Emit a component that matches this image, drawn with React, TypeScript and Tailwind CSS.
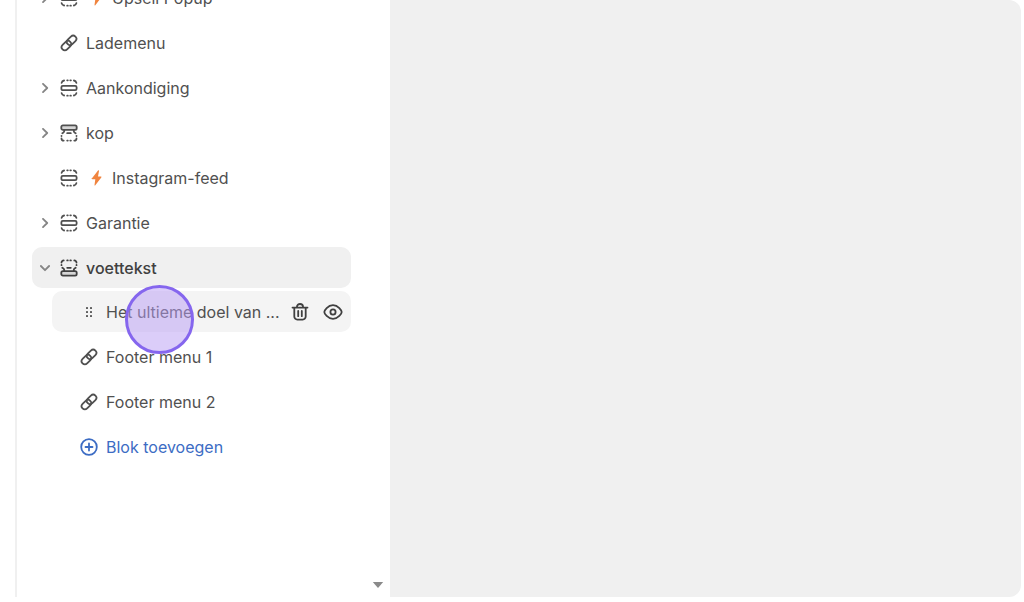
import type { ReactNode } from 'react';
import clsx from 'clsx';

type IconName = 'section' | 'header' | 'footer' | 'link';

interface Item {
  id: number;
  label: string;
  icon: IconName;
  expandable?: boolean;
  app?: boolean;
}

const sections: Item[] = [
  { id: 1, label: 'Upsell Popup', icon: 'section', expandable: true, app: true },
  { id: 2, label: 'Lademenu', icon: 'link' },
  { id: 3, label: 'Aankondiging', icon: 'section', expandable: true },
  { id: 4, label: 'kop', icon: 'header', expandable: true },
  { id: 5, label: 'Instagram-feed', icon: 'section', app: true },
  { id: 6, label: 'Garantie', icon: 'section', expandable: true },
];

const footerMenus: Item[] = [
  { id: 7, label: 'Footer menu 1', icon: 'link' },
  { id: 8, label: 'Footer menu 2', icon: 'link' },
];

const Svg = ({ children, className }: { children: ReactNode; className?: string }) => (
  <svg
    viewBox="0 0 18 18"
    className={clsx('size-[18px] shrink-0', className)}
    fill="none"
    stroke="currentColor"
    strokeWidth="1.8"
    strokeLinecap="round"
    strokeLinejoin="round"
    aria-hidden="true"
  >
    {children}
  </svg>
);

const ItemIcon = ({ name }: { name: IconName }) => {
  if (name === 'link') {
    return (
      <Svg>
        <rect x="6.2" y="3.2" width="10.8" height="6.4" rx="3.2" transform="rotate(-45 11.6 6.4)" />
        <rect x="1" y="8.4" width="10.8" height="6.4" rx="3.2" transform="rotate(-45 6.4 11.6)" />
      </Svg>
    );
  }
  if (name === 'header') {
    return (
      <Svg>
        <rect x="1.3" y="1.4" width="15.4" height="4.4" rx="1.6" fill="#d6d6d6" />
        <path d="M4.2 6.4v.8c0 1-.9 1.400-1.900 2.100M13.800 6.400v.8c0 1 .9 1.400 1.900 2.100M7.200 9.200h3.600M1.500 11.800v.2M16.500 11.800v.2M1.500 14.400a2.200 2.200 0 0 0 2.200 2.200M16.500 14.400a2.200 2.200 0 0 1-2.200 2.200M7.200 16.600h.6M10.300 16.600h.6" />
      </Svg>
    );
  }
  if (name === 'footer') {
    return (
      <Svg>
        <rect x="1.3" y="12.2" width="15.4" height="4.4" rx="1.6" fill="#d6d6d6" />
        <path d="M4.2 11.600v-.8c0-1-.9-1.400-1.900-2.100M13.800 11.600v-.8c0-1 .9-1.400 1.900-2.100M7.200 8.800h3.600M1.500 6.200v-.2M16.500 6.200v-.2M1.500 3.600a2.200 2.200 0 0 1 2.200-2.200M16.500 3.600a2.200 2.200 0 0 0-2.200-2.200M7.200 1.400h.6M10.300 1.400h.6" />
      </Svg>
    );
  }
  return (
    <Svg>
      <rect x="1.4" y="6.8" width="15.2" height="4.4" rx="1.4" />
      <path d="M1.6 3.9a3.200 3.200 0 0 1 2.500-2.400M16.400 3.900a3.200 3.200 0 0 0-2.500-2.400M7.200 1.300h.6M10.300 1.300h.6M1.600 14.100a3.200 3.200 0 0 0 2.500 2.400M16.400 14.100a3.200 3.200 0 0 1-2.500 2.400M7.200 16.700h.6M10.300 16.700h.6" />
    </Svg>
  );
};

const Chevron = ({ open }: { open?: boolean }) => (
  <svg
    viewBox="0 0 10 10"
    className={clsx('size-[10px] text-[#858585]', open && 'rotate-90')}
    fill="none"
    stroke="currentColor"
    strokeWidth="1.8"
    strokeLinecap="round"
    strokeLinejoin="round"
    aria-hidden="true"
  >
    <path d="M3 .9 7.2 5 3 9.1" />
  </svg>
);

const Bolt = () => (
  <svg viewBox="0 0 12 16" className="ml-3 mr-2.5 h-4 w-3 shrink-0 fill-[#f0843f]" aria-hidden="true">
    <path d="M8 .6 2 8.3c-.4.5-.1.9.4.9h2.900l-.8 5.700c-.1.6.4.8.8.4l6-7.900c.3-.5.1-.9-.4-.9H8L9 1C9.100.4 8.400.1 8 .6Z" />
  </svg>
);

const SectionRow = ({ item }: { item: Item }) => (
  <li className="flex h-[41px] items-center rounded-[10px] pl-2">
    <span className="flex w-5 shrink-0">
      {item.expandable && (
        <button type="button" aria-label={`${item.label} uitvouwen`}>
          <Chevron />
        </button>
      )}
    </span>
    <button type="button" className="flex items-center">
      <ItemIcon name={item.icon} />
      {item.app && <Bolt />}
      <span className={item.app ? '' : 'ml-2'}>{item.label}</span>
    </button>
  </li>
);

const FooterBlocks = () => (
  <ul className="mt-[3px] flex flex-col gap-1 pl-5">
    <li className="relative flex h-[41px] items-center rounded-[10px] bg-[#f4f4f4] pl-7 pr-2">
      <button type="button" aria-label="Verplaatsen" className="mr-2">
        <svg viewBox="0 0 18 18" className="size-[18px] fill-[#5c5c5c]" aria-hidden="true">
          {[5, 9, 13].map(y => (
            <g key={y}>
              <rect x="6" y={y - 1} width="2" height="2" rx=".5" />
              <rect x="10" y={y - 1} width="2" height="2" rx=".5" />
            </g>
          ))}
        </svg>
      </button>
      <button type="button" className="whitespace-nowrap">Het ultieme doel van ...</button>
      <button type="button" aria-label="Verwijderen" className="ml-auto text-[#404040]">
        <Svg>
          <path d="M1.5 4.6h15M6 4.2V3.6a3 2.6 0 0 1 6 0v.6M3.3 5v8.6a3 3 0 0 0 3 3h5.4a3 3 0 0 0 3-3V5M7.2 8v5.2M10.8 8v5.2" />
        </Svg>
      </button>
      <button type="button" aria-label="Verbergen" className="ml-3.5 text-[#404040]">
        <svg
          viewBox="0 0 20 18"
          className="h-[18px] w-5"
          fill="none"
          stroke="currentColor"
          strokeWidth="1.8"
          aria-hidden="true"
        >
          <path d="M1.3 9c0-1.500 3.400-6.800 8.700-6.800S18.700 7.500 18.700 9s-3.400 6.800-8.700 6.800S1.300 10.500 1.300 9Z" />
          <circle cx="10" cy="9" r="2.6" />
        </svg>
      </button>
      <span className="pointer-events-none absolute left-[73px] top-[-6px] size-[69px] rounded-full border-3 border-[#8566ee] bg-[#b89cf4]/50" />
    </li>
    {footerMenus.map(item => (
      <li key={item.id} className="flex h-[41px] items-center pl-7">
        <button type="button" className="flex items-center gap-2">
          <ItemIcon name={item.icon} />
          {item.label}
        </button>
      </li>
    ))}
    <li className="flex h-[41px] items-center pl-7">
      <button type="button" className="flex items-center gap-2 text-[#3c6cc4]">
        <Svg>
          <circle cx="9" cy="9" r="7.8" />
          <path d="M9 5.5v7M5.5 9h7" />
        </Svg>
        Blok toevoegen
      </button>
    </li>
  </ul>
);

const App = () => {
  return (
    <div className="flex h-screen overflow-hidden bg-white pb-[5px] pl-[15px] pr-[3px] font-['Inter','Liberation_Sans',sans-serif] text-base text-[#505050]">
      <aside className="flex w-[375px] shrink-0 flex-col border-l-2 border-[#f0f0f0]">
        <nav className="mt-[-23px] pl-[15px] pr-[39px]" aria-label="Secties">
          <ul className="flex flex-col gap-1">
            {sections.map(item => (
              <SectionRow key={item.id} item={item} />
            ))}
            <li>
              <div className="flex h-[41px] items-center rounded-[10px] bg-[#f0f0f0] pl-2 font-medium text-[#404040]">
                <span className="flex w-5 shrink-0">
                  <button type="button" aria-label="voettekst invouwen">
                    <Chevron open />
                  </button>
                </span>
                <button type="button" className="flex items-center gap-2">
                  <ItemIcon name="footer" />
                  voettekst
                </button>
              </div>
              <FooterBlocks />
            </li>
          </ul>
        </nav>
        <button type="button" aria-label="Omlaag scrollen" className="mb-2 mr-1.5 mt-auto self-end">
          <svg viewBox="0 0 12 8" className="h-2 w-3 fill-[#8a8a8a]" aria-hidden="true">
            <path d="M.8 1h10.4L6 7Z" />
          </svg>
        </button>
      </aside>
      <main className="flex-1 rounded-r-xl bg-[#f0f0f0]" />
    </div>
  );
};

export default App;
